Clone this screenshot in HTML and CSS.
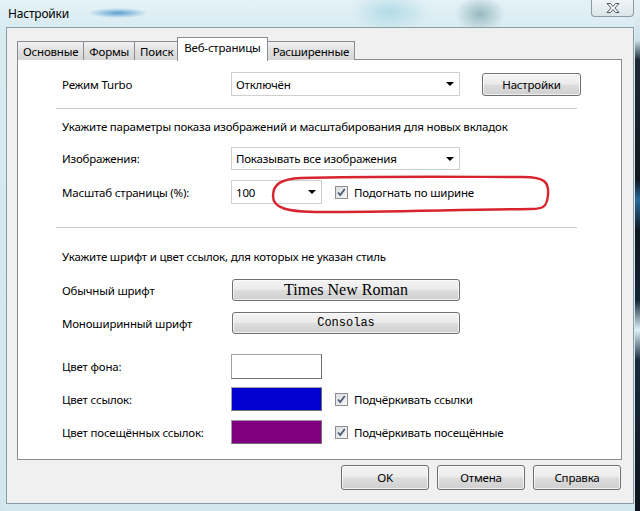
FILE: index.html
```html
<!DOCTYPE html>
<html lang="ru">

<head>
	<title>Настройки</title>
	<meta charset="utf-8">
	<link rel="stylesheet" href="styles.css">
</head>

<body>
	<div class="screen">
		<div class="window">
			<div class="titlebar">
				<span class="title">Настройки</span>
				<div class="close">
					<svg width="16" height="12" viewBox="0 0 16 12">
						<path d="M2 1.5h3.5l2.5 3 2.5-3h3.5l-4.2 4.5 4.2 4.5h-3.5l-2.5-3-2.5 3h-3.5l4.2-4.5z"
							fill="#fff" stroke="#4a5560" stroke-width="1" stroke-linejoin="round"/>
					</svg>
				</div>
			</div>
			<div class="client">
				<div class="tabs">
					<div class="tab">Основные</div>
					<div class="tab">Формы</div>
					<div class="tab">Поиск</div>
					<div class="tab active">Веб-страницы</div>
					<div class="tab">Расширенные</div>
				</div>
				<div class="panel">
					<div class="row r-turbo">
						<span class="lbl">Режим Turbo</span>
						<div class="select w-wide">Отключён<span class="arrow"></span></div>
						<div class="btn btn-turbo">Настройки</div>
					</div>
					<div class="sep sep-1"></div>
					<div class="note note-1">Укажите параметры показа изображений и масштабирования для новых вкладок</div>
					<div class="row r-img">
						<span class="lbl">Изображения:</span>
						<div class="select w-wide">Показывать все изображения<span class="arrow"></span></div>
					</div>
					<div class="row r-zoom">
						<span class="lbl">Масштаб страницы (%):</span>
						<div class="select w-short">100<span class="arrow"></span></div>
						<label class="check"><span class="box"></span>Подогнать по ширине</label>
					</div>
					<div class="sep sep-2"></div>
					<div class="note note-2">Укажите шрифт и цвет ссылок, для которых не указан стиль</div>
					<div class="row r-font">
						<span class="lbl">Обычный шрифт</span>
						<div class="btn btn-font serif">Times New Roman</div>
					</div>
					<div class="row r-mono">
						<span class="lbl">Моноширинный шрифт</span>
						<div class="btn btn-font mono">Consolas</div>
					</div>
					<div class="row r-bg">
						<span class="lbl">Цвет фона:</span>
						<div class="swatch sw-white"></div>
					</div>
					<div class="row r-link">
						<span class="lbl">Цвет ссылок:</span>
						<div class="swatch sw-blue"></div>
						<label class="check"><span class="box"></span>Подчёркивать ссылки</label>
					</div>
					<div class="row r-visited">
						<span class="lbl">Цвет посещённых ссылок:</span>
						<div class="swatch sw-purple"></div>
						<label class="check"><span class="box"></span>Подчёркивать посещённые</label>
					</div>
					<!-- hand drawn mark over the zoom row -->
					<svg class="mark" width="284" height="44" viewBox="268 172 284 44">
						<path d="M300 178 C380 176 470 177 522 177 C545 177 548 183 547 195 C546 206 543 209 530 209 C450 210 380 212 320 212 C285 212 272 208 272 196 C272 184 280 179 300 178 Z"
							fill="none" stroke="#d8242e" stroke-width="2.4"/>
					</svg>
				</div>
				<div class="buttons">
					<div class="btn btn-dlg">OK</div>
					<div class="btn btn-dlg">Отмена</div>
					<div class="btn btn-dlg">Справка</div>
				</div>
			</div>
		</div>
		<div class="desk"></div>
	</div>
</body>

</html>
```

FILE: styles.css
```css
/* page */
html,
body {
	margin: 0;
	height: 100%;
}

body {
	font-family: "Noto Sans", "Open Sans", sans-serif;
	font-size: 11.5px;
	letter-spacing: -0.2px;
	color: #000;
	background: #cfe5ec;
}

.screen {
	display: flex;
	width: 640px;
	height: 511px;
	overflow: hidden;
}

/* window frame */
.window {
	width: 635px;
	flex: none;
	padding: 0 1px 7px 6px;
	box-sizing: border-box;
	display: flex;
	flex-direction: column;
	border-radius: 0 0 6px 6px;
	background:
		radial-gradient(ellipse 30px 5px at 118px 13px, rgba(60, 140, 200, 0.8), rgba(60, 140, 200, 0) 100%),
		radial-gradient(ellipse 40px 20px at 390px 12px, rgba(160, 210, 225, 0.7), rgba(160, 210, 225, 0) 100%),
		radial-gradient(ellipse 25px 18px at 480px 14px, rgba(80, 130, 140, 0.5), rgba(80, 130, 140, 0) 100%),
		linear-gradient(180deg, #e4f2f6 0, #d7ebf1 30px, #d2e7ee 100%);
}

.titlebar {
	height: 27px;
	flex: none;
	display: flex;
	align-items: center;
	justify-content: space-between;
}

.title {
	margin: -1px 0 0 2px;
	font-size: 12px;
}

.close {
	align-self: flex-start;
	width: 43px;
	height: 17px;
	box-sizing: border-box;
	border: 1px solid #8d9aa4;
	border-top: none;
	border-radius: 0 0 4px 4px;
	background: linear-gradient(180deg, #f1f5f7, #dbe4ea);
	display: flex;
	align-items: center;
	justify-content: center;
}

.desk {
	flex: 1;
	background: linear-gradient(180deg, #e6f1f4 0, #d0e2ea 40px, #1d2a36 60px, #10161e 180px, #2a6a9a 200px, #0f1820 230px, #142232 300px, #e0f0f8 330px, #1a2a3a 360px, #0d141c 100%);
}

/* client area */
.client {
	flex: 1;
	background: #f0f0f0;
	border: 1px solid #8c9ba6;
	padding: 9px 11px 0 10px;
	display: flex;
	flex-direction: column;
}

.tabs {
	display: flex;
	align-items: flex-end;
	height: 23px;
	position: relative;
	z-index: 1;
	margin-bottom: -1px;
}

.tab {
	height: 19px;
	box-sizing: border-box;
	padding: 0 5px;
	border: 1px solid #898c95;
	border-bottom: none;
	margin-right: -1px;
	background: linear-gradient(180deg, #f2f2f2, #e0e0e0 50%, #d6d6d6);
	display: flex;
	align-items: center;
}

.tab.active {
	height: 24px;
	background: #fff;
	padding: 0 6px 4px;
	margin: 0 -1px 0 -1px;
	position: relative;
	top: 1px;
	z-index: 2;
}

.panel {
	height: 401px;
	box-sizing: border-box;
	background: #fff;
	border: 1px solid #898c95;
	padding: 12px 0 0 44px;
	position: relative;
}

/* rows */
.row {
	display: flex;
	align-items: center;
}

.lbl {
	width: 169px;
	flex: none;
}

.r-turbo {
	height: 24px;
}

.r-img {
	height: 23px;
	margin-top: 12px;
}

.r-zoom {
	height: 24px;
	margin-top: 10px;
}

.r-font {
	height: 22px;
	margin-top: 14px;
}

.r-mono {
	height: 22px;
	margin-top: 11px;
}

.r-bg {
	height: 25px;
	margin-top: 20px;
}

.r-link {
	height: 24px;
	margin-top: 8px;
}

.r-visited {
	height: 24px;
	margin-top: 9px;
}

.sep {
	height: 1px;
	width: 521px;
	margin-left: -6px;
	background: #c6c6c6;
}

.sep-1 {
	margin-top: 12px;
}

.sep-2 {
	margin-top: 23px;
}

.note {
	line-height: 16px;
}

.note-1 {
	margin-top: 10px;
}

.note-2 {
	margin-top: 21px;
}

/* controls */
.select {
	height: 100%;
	box-sizing: border-box;
	border: 1px solid #cfcfcf;
	background: #fff;
	padding-left: 4px;
	display: flex;
	align-items: center;
	position: relative;
}

.w-wide {
	width: 229px;
}

.w-short {
	width: 91px;
}

.arrow {
	position: absolute;
	right: 5px;
	top: 50%;
	margin-top: -2px;
	border-left: 4px solid transparent;
	border-right: 4px solid transparent;
	border-top: 4px solid #000;
}

.btn {
	box-sizing: border-box;
	border: 1px solid #707070;
	border-radius: 3px;
	background: linear-gradient(180deg, #f4f4f4 0, #ebebeb 48%, #dddddd 52%, #cfcfcf 100%);
	display: flex;
	align-items: center;
	justify-content: center;
	box-shadow: inset 0 0 0 1px rgba(255, 255, 255, 0.7);
}

.btn-turbo {
	width: 99px;
	height: 23px;
	margin-left: 22px;
}

.btn-font {
	width: 228px;
	height: 22px;
	margin-left: 1px;
}

.serif {
	font-family: "Liberation Serif", serif;
	font-size: 16px;
	letter-spacing: 0;
}

.mono {
	font-family: "Liberation Mono", monospace;
	font-size: 12px;
	letter-spacing: 0;
}

.swatch {
	width: 91px;
	height: 100%;
	box-sizing: border-box;
	border: 1px solid #a0a0a0;
	border-right-color: #707070;
	border-bottom-color: #707070;
}

.sw-white {
	background: #fff;
}

.sw-blue {
	background: #0000d0;
}

.sw-purple {
	background: #800080;
}

.check {
	display: flex;
	align-items: center;
	margin-left: 13px;
}

.box {
	width: 13px;
	height: 13px;
	box-sizing: border-box;
	border: 1px solid #8e8f8f;
	margin-right: 6px;
	background:
		url("data:image/svg+xml,%3Csvg xmlns='http://www.w3.org/2000/svg' width='11' height='11' viewBox='0 0 11 11'%3E%3Cpath d='M2 5.5l2.2 2.6L8.8 2' fill='none' stroke='%234c5d75' stroke-width='1.8'/%3E%3C/svg%3E") center/11px 11px no-repeat,
		linear-gradient(135deg, #dcdee2, #f6f6f6);
}

.mark {
	position: absolute;
	left: 251px;
	top: 112px;
}

/* dialog buttons */
.buttons {
	display: flex;
	justify-content: flex-end;
	gap: 8px;
	margin-top: 5px;
	padding-right: 1px;
}

.btn-dlg {
	width: 88px;
	height: 25px;
}
```
